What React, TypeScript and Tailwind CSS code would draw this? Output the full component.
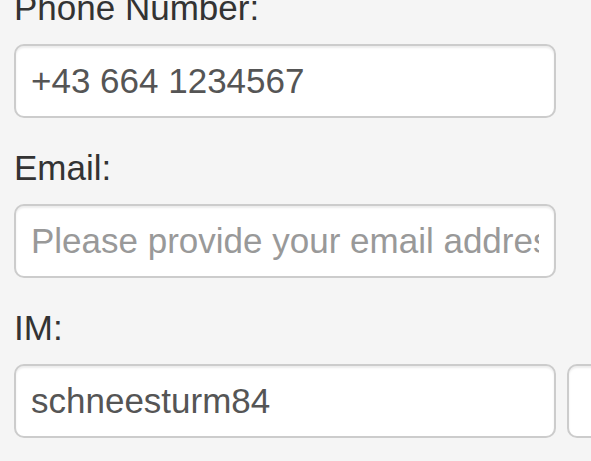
import React from 'react'

const inputCls =
  'block shrink-0 w-[542px] h-[74px] px-[15px] py-[10px] leading-[49px] text-[35px] text-[#555555] bg-white border-2 border-[#cccccc] rounded-[10px] shadow-[inset_0_2px_2px_rgba(0,0,0,0.075)] outline-none placeholder:text-[#999999]'

function Field({ label, children }: { label: string; children: React.ReactNode }) {
  return (
    <div className="mb-[25px]">
      <label className="block mb-[12px] h-[49px] leading-[49px] text-[35px] text-[#333333]">{label}</label>
      {children}
    </div>
  )
}

export default function App() {
  return (
    <div className="min-h-screen w-full overflow-hidden bg-[#f5f5f5] font-['Liberation_Sans',Arial,sans-serif]">
      <div className="-mt-[17px] pl-[14px]">
        <Field label="Phone Number:">
          <input type="text" defaultValue="+43 664 1234567" className={inputCls} />
        </Field>

        <Field label="Email:">
          <input type="email" placeholder="Please provide your email address" className={inputCls} />
        </Field>

        <Field label="IM:">
          <div className="flex gap-[11px]">
            <input type="text" defaultValue="schneesturm84" className={inputCls} />
            <input type="text" className={inputCls} />
          </div>
        </Field>
      </div>
    </div>
  )
}
